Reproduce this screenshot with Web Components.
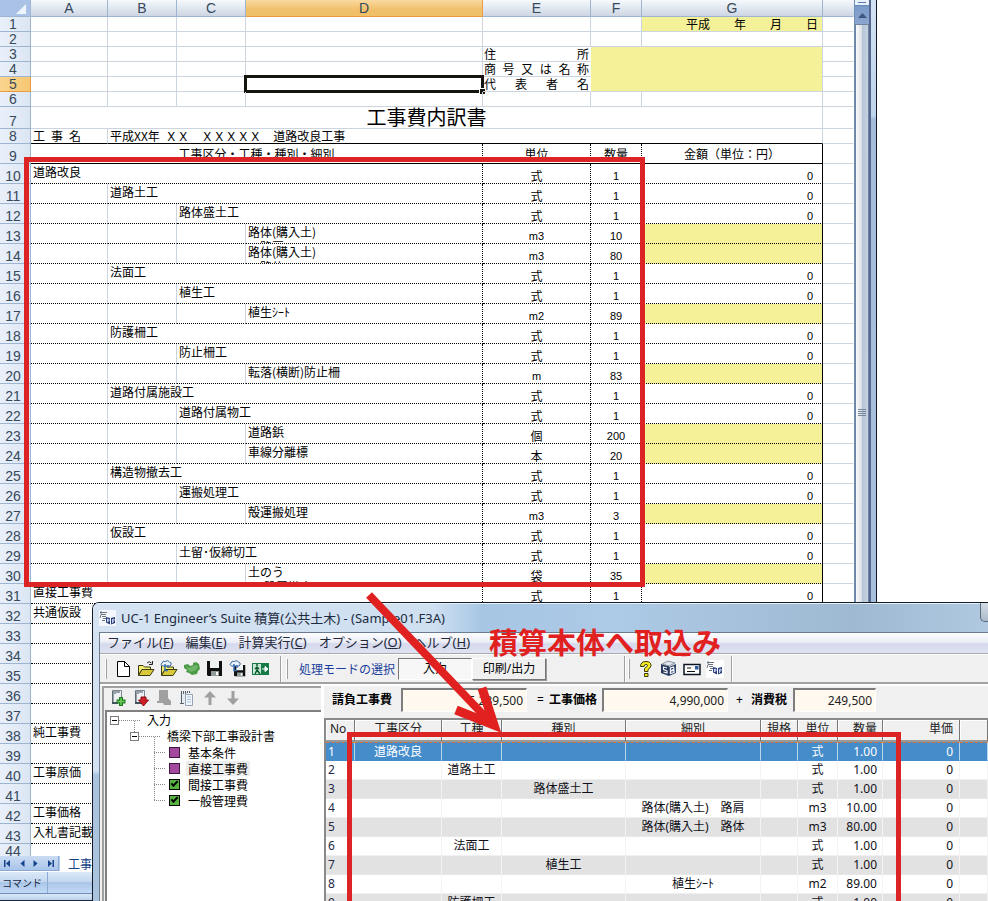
<!DOCTYPE html>
<html lang="ja">
<head>
<meta charset="utf-8">
<title>UC-1 Engineer's Suite 積算</title>
<style>
html,body{margin:0;height:100%;overflow:hidden;background:#fff}
body{font:12px/16px "Noto Sans","Noto Sans CJK JP",sans-serif;color:#000}
</style>
</head>
<body>
<desk-top>
  <book-window><sheet-grid></sheet-grid></book-window>
  <mark-box class="first"></mark-box>
  <app-window caption="UC-1 Engineer’s Suite 積算(公共土木) - (Sample01.F3A)">
    <menu-bar slot="menu"></menu-bar>
    <tool-bars slot="tools"></tool-bars>
    <tree-panel slot="side"></tree-panel>
    <amount-bar slot="main">
      <amount-field name="請負工事費" value="5,239,500"></amount-field>
      <amount-field sign="=" name="工事価格" value="4,990,000"></amount-field>
      <amount-field class="tax" sign="+" name="消費税" value="249,500"></amount-field>
    </amount-bar>
    <estimate-grid slot="main"></estimate-grid>
  </app-window>
  <mark-box class="second"></mark-box>
  <call-out>積算本体へ取込み</call-out>
</desk-top>

<script>
function define(name, html, setup) {
  customElements.define(name, class extends HTMLElement {
    constructor() {
      super();
      const t = document.createElement('template');
      t.innerHTML = html;
      this.attachShadow({mode: 'open'}).append(t.content.cloneNode(true));
    }
    connectedCallback() { if (setup) setup.call(this, this.shadowRoot); }
  });
}

define('desk-top', `
<style>
:host{display:block;position:relative;height:100vh;overflow:hidden;background:#fff}
::slotted(book-window){height:100%;margin-right:111px}
::slotted(mark-box){position:absolute}
::slotted(mark-box.first){left:24px;right:343px;top:157px;height:430px}
::slotted(mark-box.second){left:347px;right:87px;top:732px;bottom:-20px}
::slotted(app-window){position:absolute;left:92px;top:602px;right:0;bottom:0}
::slotted(call-out){position:absolute;left:360px;top:585px}
</style><slot></slot>`);

define('mark-box', `<style>:host{box-sizing:border-box;border:5px solid #dd2424;pointer-events:none}</style>`);

define('call-out', `
<style>
:host{display:block;width:380px;height:160px;pointer-events:none;color:#e0211f;
 font:bold 29px/36px "Noto Sans CJK JP",sans-serif}
svg{position:absolute;left:0;top:0}
p{margin:0;padding:38px 0 0 129px;white-space:nowrap}
</style>
<svg width="160" height="160" viewBox="0 0 160 160" fill="none" stroke="#e0211f" stroke-width="8">
<path d="M9 10 L132 139"/><path d="M122 103 L134 140 L96 125" stroke-width="9"/></svg>
<p><slot></slot></p>`);

/* ---------- workbook window ---------- */
define('book-window', `
<style>
:host{display:flex;flex-direction:column;position:relative;background:#fff}
.body{flex:1;min-height:0;display:flex;overflow:hidden}
.sheet{flex:1;min-width:0;overflow:hidden}
.scroll{flex:none;width:15px;display:flex;flex-direction:column;background:#dde5f0;border-left:1px solid #6f8fbb;box-sizing:border-box}
.split{height:6px;background:#e9f2fc;border-bottom:1px solid #6888b5;box-sizing:border-box;text-align:center}
.split::before{content:"";display:block;width:8px;height:1px;background:#5b7bab;margin:2px auto 0}
button{border:0;padding:0;margin:0;font:inherit;background:none}
.up{height:18px;background:linear-gradient(#7b9bc9,#8aa6ce);display:flex;align-items:center;justify-content:center}
.thumb{flex:1;border:1px solid #71849f;background:linear-gradient(90deg,#fafbfc,#dde1e6 45%,#b6c5d8 55%,#c6d2e1);display:flex;justify-content:center}
.thumb svg{margin-top:384px}
.frame{flex:none;width:8px;box-sizing:border-box;border-left:2px solid #56688f;border-right:1px solid #101722;background:linear-gradient(#d3e3f3 0,#bed4ea 116px,#a3bdda 119px,#a9c3df)}
.tabs{flex:none;height:15px;display:flex;background:#b7cfee;align-items:stretch;overflow:hidden}
.nav{width:59px;display:flex;align-items:center;justify-content:space-around;background:linear-gradient(#cbdcf3,#a9c5ea);border-right:1px solid #89a9d4;border-bottom:1px solid #89a9d4;box-sizing:border-box}
.nav button{display:flex}
.tab{background:#fff;color:#15428b;padding:0 8px;margin-left:1px;font:12px/15px "Noto Sans CJK JP",sans-serif}
.status{flex:none;height:22px;display:flex;align-items:center;box-sizing:border-box;border-bottom:1px solid #6f8eb8;background:linear-gradient(#dbe8f8,#c4d8f0 45%,#aac6e8 50%,#c2dbf7);font:10px/14px "Noto Sans CJK JP",sans-serif;color:#1c2b45;padding-left:2px;margin-top:1px}
.status span{width:45px;border-right:1px solid #8cacd6;align-self:stretch;line-height:21px}
.base{flex:none;height:7px;box-sizing:border-box;background:linear-gradient(#dce9f6,#b9d0e8);border-bottom:1px solid #1b2a3f}
</style>
<div class="body">
 <div class="sheet"><slot></slot></div>
 <div class="scroll"><div class="split"></div>
  <button class="up" aria-label="上へ"><svg width="9" height="5"><path d="M0 5 L4.500 0 L9 5Z" fill="#3f5681"/></svg></button>
  <div class="thumb"><svg width="8" height="8"><path d="M0 .5H8M0 2.500H8M0 4.500H8M0 6.500H8" stroke="#77879c"/></svg></div></div>
 <div class="frame"></div>
</div>
<div class="tabs"><div class="nav">
 <button aria-label="先頭"><svg width="7" height="7"><path d="M0 0H1.500V7H0ZM6 0V7L2 3.500Z" fill="#15428b"/></svg></button>
 <button aria-label="前"><svg width="5" height="7"><path d="M4.500 0V7L.5 3.500Z" fill="#15428b"/></svg></button>
 <button aria-label="次"><svg width="5" height="7"><path d="M.5 0V7L4.500 3.500Z" fill="#15428b"/></svg></button>
 <button aria-label="末尾"><svg width="7" height="7"><path d="M5.500 0H7V7H5.500ZM1 0V7L5 3.500Z" fill="#15428b"/></svg></button>
 </div><button class="tab">工事</button></div>
<div class="status"><span>コマンド</span></div>
<div class="base"></div>`);

const items = [
 [10,0,'道路改良','式','1','0'],[11,1,'道路土工','式','1','0'],[12,2,'路体盛土工','式','1','0'],
 [13,3,'路体(購入土)<br>　路肩','m3','10'],[14,3,'路体(購入土)<br>　路体','m3','80'],
 [15,1,'法面工','式','1','0'],[16,2,'植生工','式','1','0'],[17,3,'植生ｼｰﾄ','m2','89'],
 [18,1,'防護柵工','式','1','0'],[19,2,'防止柵工','式','1','0'],[20,3,'転落(横断)防止柵','m','83'],
 [21,1,'道路付属施設工','式','1','0'],[22,2,'道路付属物工','式','1','0'],
 [23,3,'道路鋲','個','200'],[24,3,'車線分離標','本','20'],
 [25,1,'構造物撤去工','式','1','0'],[26,2,'運搬処理工','式','1','0'],[27,3,'殻運搬処理','m3','3'],
 [28,1,'仮設工','式','1','0'],[29,2,'土留･仮締切工','式','1','0'],[30,3,'土のう<br>　(設置撤去)','袋','35'],
 [31,0,'直接工事費','式','1','0']
];
const totals = {32:'共通仮設',38:'純工事費',40:'工事原価',42:'工事価格',43:'入札書記載'};
for (let n = 32; n <= 43; n++) items.push([n,0,totals[n] || '','','',' ']);

define('sheet-grid', `
<style>
:host{display:block}
table{width:100%;table-layout:fixed;border-collapse:separate;border-spacing:0;font:12px/15px "Noto Sans CJK JP",sans-serif}
th,td{padding:0;border:0 solid #ccd4e0;border-width:0 1px 1px 0;font-weight:normal;text-align:left;position:relative}
.c{height:14px;display:flex;align-items:flex-end;white-space:nowrap;line-height:15px}
thead .c{height:16px;align-items:center;justify-content:center}
th{font:14px/14px "Liberation Sans",sans-serif;color:#37495c;background:linear-gradient(90deg,#e9f0fa,#dce6f3);border-color:#9db5d0}
th .c{line-height:14px;justify-content:center}
thead th{background:linear-gradient(#f6f9fc,#dfe6ef 55%,#ccd6e3)}
thead th.corner{background:#a9c2e6}
thead th.corner .c{justify-content:flex-end}
thead th.on{background:linear-gradient(#f9d9a0,#f0c06a 60%,#efc068);border-color:#ef9b43}
tbody th .c{padding-right:4px}
tbody th.on{background:linear-gradient(90deg,#fad48f,#f6c873);border-color:#ef9b43}
.t .c{height:21px;font-size:20px;line-height:22px;justify-content:center}
.t th .c{font-size:14px;line-height:14px}
.h .c,.r .c{height:19px}
.no{border-right-color:transparent}
.k>td:not(.x){border-bottom:1px solid #000}
.r>td:not(.x){border-bottom:1px dotted #000}
.dot{border-right:1px dotted #000!important}
.sol{border-right:1px solid #000!important}
.y{background:#f5f199}
.name .c{align-items:flex-start;padding-left:2px;overflow:hidden}
.mid .c{justify-content:center}
.mid.num .c,.amt .c{font-family:"Liberation Sans","Noto Sans CJK JP",sans-serif;font-size:11px;line-height:13px}
.amt .c{justify-content:flex-end;padding-right:9px}
.h .c{align-items:center}
.h th .c{align-items:flex-end}
.sp .c{justify-content:space-between;padding:0 1px}
.kn .c{padding:0 26px 0 2px}
.b .c{padding-left:2px}
.date .c{justify-content:flex-end;padding-right:4px}
.sel{position:absolute;inset:-2px;border:3px solid #15140f}
.sel::after{content:"";position:absolute;right:-4px;bottom:-4px;width:5px;height:5px;background:#15140f;border:1px solid #fff;border-width:1px 0 0 1px}
</style>
<table><colgroup><col style="width:31px"><col style="width:77px"><col style="width:69px"><col style="width:69px"><col><col style="width:108px"><col style="width:51px"><col style="width:181px"><col style="width:31px"></colgroup>
<thead></thead><tbody></tbody></table>`, function (root) {
  const td = (cls, text = '', span = 1) => `<td class="${cls}" colspan="${span}"><div class="c">${text}</div></td>`;
  const th = (n, on) => `<th scope="row"${on ? ' class="on"' : ''}><div class="c">${n}</div></th>`;
  const spread = s => [...s].map(ch => `<span>${ch}</span>`).join('');
  root.querySelector('thead').innerHTML = '<tr><th class="corner"><div class="c"><svg width="14" height="14"><path d="M10 3V13H0Z" fill="#eef4fc"/></svg></div></th>' +
    [...'ABCDEFG'].map(l => `<th scope="col"${l === 'D' ? ' class="on"' : ''}><div class="c">${l}</div></th>`).join('') + '<th class="no"></th></tr>';
  const end = td('x no');
  let h = '';
  h += `<tr>${th(1)}${td('').repeat(6)}${td('y date', '平成　　年　　月　　日')}${end}</tr>`;
  h += `<tr>${th(2)}${td('').repeat(7)}${end}</tr>`;
  h += `<tr>${th(3)}${td('').repeat(4)}${td('sp no', spread('住所'))}<td class="y" colspan="2" rowspan="3"></td>${end}</tr>`;
  h += `<tr>${th(4)}${td('').repeat(4)}${td('sp no', spread('商号又は名称'))}${end}</tr>`;
  h += `<tr>${th(5, true)}${td('').repeat(3)}<td><div class="c"></div><div class="sel"></div></td>${td('sp no', spread('代表者名'))}${end}</tr>`;
  h += `<tr>${th(6)}${td('').repeat(7)}${end}</tr>`;
  h += `<tr class="t">${th(7)}${td('', '工事費内訳書', 7)}${end}</tr>`;
  h += `<tr class="k">${th(8)}${td('sp kn', spread('工事名'))}${td('b', '平成XX年&nbsp; ＸＸ　ＸＸＸＸＸ　道路改良工事', 6)}${end}</tr>`;
  h += `<tr class="h k">${th(9)}${td('mid dot', '工事区分・工種・種別・細別', 4)}${td('mid dot', '単位')}${td('mid dot', '数量')}${td('mid sol', '金額（単位：円）')}${end}</tr>`;
  for (const [n, lv, name, unit, qty, amt] of items) {
    h += `<tr class="r">${th(n)}${td('').repeat(lv)}${td('name dot', `<span>${name}</span>`, 4 - lv)}${td(unit[0] === 'm' ? 'mid num dot' : 'mid dot', unit)}${td('mid num dot', qty)}${td(amt ? 'amt sol' : 'amt sol y', amt)}${end}</tr>`;
  }
  h += `<tr>${th(44)}${td('').repeat(7)}${end}</tr>`;
  root.querySelector('tbody').innerHTML = h;
});

/* ---------- estimate application window ---------- */
const logo = `<path d="M1 2.500H8M2 1V4M7 4.500H2L1 8M3 6.500H7M4 8.500H8M3 10.500H6" stroke="#6b747e" stroke-width="1" fill="none"/><path d="M7 7L11 8V14.500L7 12.500Z M12 8L16 7V13L12 14.500Z" fill="#2b3f7d"/><path d="M8.500 12V9L10 9.500V11L8.500 11M13.500 13V9.500L15 9V11L13.500 11.500" stroke="#c9d4ee" fill="none"/>`;

define('app-window', `
<style>
:host{display:flex;flex-direction:column;box-sizing:border-box;border:1px solid #161c26;border-width:1px 0 0 1px;border-radius:7px 0 0 0;overflow:hidden;padding:0 0 0 6px;
 background:linear-gradient(#cfdff0 0,#c5d8ec 28px,#d3e1f0 30px,#d3e1f0 168px,#a9c2de 172px)}
header{display:flex;align-items:center;height:29px;flex:none;margin-left:-6px;padding-left:6px;color:#1d2b40;background:linear-gradient(90deg,#d5e3f2 0,#cfe0f1 340px,#a6c6e4 390px,#adcae6 520px,#9fb9d2 760px,#b0c9e1);box-shadow:inset 0 1px #e8f2fb}
header svg{margin-right:5px;background:#f4f7fb}
header h1{font:13px/18px "Noto Sans","Noto Sans CJK JP",sans-serif;margin:0;flex:1;white-space:nowrap}
header button{width:8px;height:19px;align-self:flex-start;border:1px solid #5b6a7c;border-width:0 0 1px 1px;border-radius:0 0 0 5px;background:linear-gradient(#d5dde6,#a9b9ca);padding:0}
.client{flex:1;min-height:0;display:flex;flex-direction:column;background:#f0f0f0;border:1px solid #6a7b8f;border-width:1px 0 0 1px}
.panes{flex:1;min-height:0;display:flex;border-top:2px solid #fff}
.side{flex:none;width:221px;display:flex}
::slotted(tree-panel){flex:1}
.main{flex:1;min-width:0;display:flex;flex-direction:column;border-left:3px solid #fff}
</style>
<header><svg width="17" height="16" viewBox="0 0 17 16">${logo}</svg><h1></h1><button aria-label="最小化"></button></header>
<div class="client"><slot name="menu"></slot><slot name="tools"></slot>
<div class="panes"><div class="side"><slot name="side"></slot></div><div class="main"><slot name="main"></slot></div></div></div>`,
function (root) { root.querySelector('h1').textContent = this.getAttribute('caption'); });

define('menu-bar', `
<style>
:host{display:flex;flex:none;height:20px;background:linear-gradient(#fdfdff,#eceef7 45%,#d5d9ec 55%,#dfe2f1);border-bottom:1px solid #a9a9a9;box-shadow:0 1px #fff;white-space:nowrap;padding-left:1px}
button{border:0;background:none;padding:0 6px;margin:0;color:#23283a;font:13px/18px "Noto Sans","Noto Sans CJK JP",sans-serif;height:18px}
</style>
<button>ファイル(<u>F</u>)</button><button>編集(<u>E</u>)</button><button>計算実行(<u>C</u>)</button><button>オプション(<u>O</u>)</button><button>ヘルプ(<u>H</u>)</button>`);

const folder = `<path d="M1.500 5.500H6L7.500 7H13.500V9.500H5L1.500 15Z" fill="#f6ef6e" stroke="#3b3a10"/><path d="M1.500 15.500L5 9.500H17L13 15.500Z" fill="#d9c93a" stroke="#3b3a10"/>`;
const cloud = `<path d="M2.500 6Q0 4.500 2 3Q2.500 .5 5.500 1.500Q8 -.5 9.500 2Q12 2.500 11 5Q10 6.500 8.500 6Z" fill="#eaf3fd" stroke="#38689e"/><path d="M5 4V10.500H8M8 5V8" stroke="#3a70b0" fill="none" stroke-width="1.500"/>`;
const disk = (x, y, s) => `<g transform="translate(${x} ${y}) scale(${s})"><path d="M0 0H15V15H1L0 14Z" fill="#111"/><path d="M3 0H12V7H3Z" fill="#eef2f2"/><path d="M4 10H12V15H4Z" fill="#8f9a9a"/><path d="M9 11H11V14H9Z" fill="#fff"/></g>`;
const page = `<path d="M3.500 1.500H12.500V13.500H3.500Z" fill="#eef1f4" stroke="#7a8790"/><path d="M4 2V14M6 2V5M8 2V4M10 2V4" stroke="#44525c"/><path d="M3 14H9" stroke="#44525c" stroke-width="2"/>`;
const icons = {
 new:`<path d="M3.500 1.500H10.500L15.500 6.500V16.500H3.500Z" fill="#fff" stroke="#000"/><path d="M10.500 1.500V6.500H15.500" fill="none" stroke="#000"/>`,
 open:`${folder}<path d="M10 3Q12 .5 14.500 3M15.500 1V4.500H12" fill="none" stroke="#222"/>`,
 cloudopen:`${folder}${cloud}`,
 green:`<path d="M1 5L5 4L7 6L10 5V3L13 2L16 4L17 9L15 11L14 14L9 15L6 13L3 12L4 10L1 8Z" fill="#4d9a47"/><path d="M3 6L6 8L12 5L15 6L13 10L8 12L5 10Z" fill="#6fb468"/>`,
 save:disk(1, 1, 1),
 cloudsave:`${disk(5, 5, .75)}${cloud}`,
 exit:`<path d="M0 3H17V15H0Z" fill="#157a45"/><path d="M1 4H9V14H1Z" fill="#c6e7d3"/><path d="M5 4V6M3 9L5 7L7 9M5 7V10L3 14M5 10L8 14" stroke="#0c5b30" stroke-width="1.500" fill="none"/><path d="M10 9H14M13 6.500L16 9L13 11.500Z" stroke="#fff" fill="#fff"/>`,
 help:`<path d="M3.500 6.500Q3.500 1.500 9 1.500Q14 1.500 14 5.500Q14 7.500 11 9.500V11.500H7.500V8.500Q10.500 6.500 10.500 5.500Q10.500 4.500 9 4.500Q7 4.500 7 6.500Z" fill="#f3ea21" stroke="#3c3a00"/><path d="M7.500 13.500H11V16.500H7.500Z" fill="#f3ea21" stroke="#3c3a00"/>`,
 book:`<path d="M1 4L9 6V16L1 13Z" fill="#26365a"/><path d="M9 7L16 4V13L9 16Z" fill="#33466e"/><path d="M2 4L8 1L15 3L9 6Z" fill="#dfe5ea" stroke="#8a96a3"/><path d="M7 8L3.500 7V9.500L7 11V13L3.500 12M10.500 14V8L13.500 7L14 9L11 11L14 10.500V12.500L10.500 13.500" stroke="#f2f5fa" fill="none" stroke-width="1.200"/>`,
 card:`<path d="M1 4.500H17V14.500H1Z" fill="#fff" stroke="#0d1424" stroke-width="1.500"/><path d="M4 8H8M4 11.500H12" stroke="#111" stroke-width="1.200"/><path d="M12 6H15.500V9.500H12Z" fill="#2d5aa0"/>`,
 logo:`<path d="M0 0H18V18H0Z" fill="#fff"/>${logo}`,
 add:`${page}<path d="M12 8V17M7.500 12.500H16.500" stroke="#1d7c23" stroke-width="4"/><path d="M12 9V16M8.500 12.500H15.500" stroke="#70ce5b" stroke-width="1.500"/>`,
 del:`${page}<path d="M9 8H14V11H16.500L11.500 17L6.500 11H9Z" fill="#cf1f24" stroke="#8d0f14"/>`,
 dis:`<path d="M4 1H13V9L16 12V16H9L8 14H2V12H4Z" fill="#a0a0a0"/>`,
 copy:`<path d="M2 2H10V14H2Z" fill="#e8ebee"/><path d="M2 14.500H6M3.500 2V14M5.500 2V5M7.500 2V5M9.500 2V4M11.500 2V4" stroke="#59646e" fill="none"/><path d="M7.500 5.500H14.500V16.500H7.500Z" fill="#f4f7fb" stroke="#93a4b8"/><path d="M9 8H13M9 10.500H13M9 13H13" stroke="#a8bfda"/>`,
 up:`<path d="M9 2L15 8.500H10.500V16H7.500V8.500H3Z" fill="#a0a0a0"/>`,
 down:`<path d="M9 16L15 9.500H10.500V2H7.500V9.500H3Z" fill="#a0a0a0"/>`
};

define('icon-button', `
<style>:host{display:block;flex:none;width:23px}button{display:flex;align-items:center;justify-content:center;width:23px;height:20px;border:0;padding:0;background:none}</style>
<button><svg width="18" height="18" viewBox="0 0 18 18"></svg></button>`, function (root) {
  root.querySelector('svg').innerHTML = icons[this.getAttribute('icon')];
  root.querySelector('button').setAttribute('aria-label', this.getAttribute('label'));
});

define('tool-bars', `
<style>
:host{display:flex;flex:none;height:26px;margin-top:2px;border-bottom:2px solid #a2a2a2;background:#f0f0f0}
.bar{display:flex;align-items:center;box-sizing:border-box;border-right:1px solid #a0a0a0;box-shadow:1px 0 #fff;padding-left:3px}
.bar::before{content:"";width:1px;height:20px;border-right:1px solid #a0a0a0;background:#fff;margin:0 4px 0 2px;flex:none}
.a{width:181px}.b{width:344px}.c{width:107px;padding-left:1px}
.b>button{height:22px;width:74px;margin:0;padding:0;box-sizing:border-box;font:12px/16px "Noto Sans","Noto Sans CJK JP",sans-serif;background:#f0f0f0;border:1px solid;border-color:#fff #777 #777 #fff;box-shadow:1px 1px #999}
.b>.down{background:#f7f7f7;border-color:#777 #fff #fff #777;box-shadow:none}
span{color:#1b3f9c;padding:0 3px 0 7px;white-space:nowrap;font:12px/16px "Noto Sans CJK JP",sans-serif}
</style>
<div class="bar a"><icon-button icon="new" label="新規"></icon-button><icon-button icon="open" label="開く"></icon-button><icon-button icon="cloudopen" label="クラウドから開く"></icon-button><icon-button icon="green" label="地域"></icon-button><icon-button icon="save" label="保存"></icon-button><icon-button icon="cloudsave" label="クラウドへ保存"></icon-button><icon-button icon="exit" label="終了"></icon-button></div>
<div class="bar b"><span>処理モードの選択</span><button class="down">入力</button><button>印刷/出力</button></div>
<div class="bar c"><icon-button icon="help" label="ヘルプ"></icon-button><icon-button icon="book" label="マニュアル"></icon-button><icon-button icon="card" label="連絡先"></icon-button><icon-button icon="logo" label="情報"></icon-button></div>`);

define('tree-panel', `
<style>
:host{display:flex;flex-direction:column;box-sizing:border-box;border:1px solid #a0a0a0;border-width:2px 0 0 2px;margin-left:2px;font:12px/16px "Noto Sans CJK JP",sans-serif}
.tools{display:flex;height:22px;padding-left:2px;align-items:flex-start;flex:none}
.tree{flex:1;background:#fff;border:2px solid #808080;border-width:2px 0 0 2px;margin-left:1px;box-sizing:border-box}
ul{list-style:none;margin:0;padding:0}
.tree>ul{padding-left:3px}
li li{padding-left:20px}
.row{display:flex;align-items:center;height:16px;white-space:nowrap}
.box{width:9px;height:9px;box-sizing:border-box;border:1px solid #7c7c7c;background:#fff;padding:0;display:flex;align-items:center;justify-content:center;flex:none}
.box::before{content:"";width:5px;height:1px;background:#000}
.row i{width:21px;margin-right:7px;border-top:1px dotted #888;flex:none}
.kid{position:relative}
.kid::before{content:"";position:absolute;left:24px;top:-7px;height:11px;border-left:1px dotted #888}
.leafs{position:relative}
.leafs::before{content:"";position:absolute;left:24px;top:-7px;height:63px;border-left:1px dotted #888}
.leafs .row i{width:11px;margin:0 4px 0 4px}
input{appearance:none;width:11px;height:11px;box-sizing:border-box;margin:0 6px 0 0;border:1px solid #3b1840;background:#a4489d;flex:none}
input:checked{border-color:#000;background:#55b43c;display:flex}
input:checked::before{content:"";width:5px;height:2px;border:solid #000;border-width:0 0 2px 2px;transform:rotate(-45deg);margin:1px 0 0 1px}
label{padding:0 2px;line-height:15px}
.on{background:#ededed}
</style>
<div class="tools"><icon-button icon="add" label="追加"></icon-button><icon-button icon="del" label="削除"></icon-button><icon-button icon="dis" label="切り取り"></icon-button><icon-button icon="copy" label="コピー"></icon-button><icon-button icon="up" label="上へ"></icon-button><icon-button icon="down" label="下へ"></icon-button></div>
<div class="tree"><ul><li><div class="row"><button class="box" aria-label="閉じる"></button><i></i><span>入力</span></div>
<ul class="kid"><li><div class="row"><button class="box" aria-label="閉じる"></button><i></i><span>橋梁下部工事設計書</span></div>
<ul class="leafs">
<li><div class="row"><i></i><input type="checkbox" id="a"><label for="a">基本条件</label></div></li>
<li><div class="row"><i></i><input type="checkbox" id="b"><label for="b" class="on">直接工事費</label></div></li>
<li><div class="row"><i></i><input type="checkbox" id="c" checked><label for="c">間接工事費</label></div></li>
<li><div class="row"><i></i><input type="checkbox" id="d" checked><label for="d">一般管理費</label></div></li>
</ul></li></ul></li></ul></div>`);

define('amount-bar', `<style>:host{display:flex;flex:none;height:32px;align-items:center;padding:0 0 4px 8px;box-sizing:border-box;background:#f0f0f0}</style><slot></slot>`);

define('amount-field', `
<style>
:host{display:flex;align-items:center;margin-right:10px;--w:126px}
:host([sign="="]){margin-right:8px}
:host(.tax){--w:83px}
b{font-weight:normal;width:12px}
b:empty{display:none}
label{font-weight:bold;padding-right:9px;white-space:nowrap}
:host([sign="="]) label{padding-right:5px}
:host(.tax) label{padding-right:6px}
:host(.tax) b{width:15px}
input{width:var(--w);height:24px;box-sizing:border-box;border:1px solid;border-width:2px 1px 1px 2px;border-color:#7d7d7d #fff #fff #7d7d7d;background:#fff9f0;text-align:right;padding:0 3px 0 0;font:12px/16px "Noto Sans","Noto Sans CJK JP",sans-serif;color:#222;margin:0}
</style><b></b><label for="v"></label><input id="v" readonly>`, function (root) {
  root.querySelector('b').textContent = this.getAttribute('sign') || '';
  root.querySelector('label').textContent = this.getAttribute('name');
  root.querySelector('input').value = this.getAttribute('value');
});

define('estimate-grid', `
<style>
:host{display:block;flex:1;min-height:0;overflow:hidden;border:2px solid #8a8a8a;border-width:2px 0 0 2px;background:#fff}
table{width:100%;table-layout:fixed;border-collapse:separate;border-spacing:0}
th,td{padding:0;font-weight:normal;white-space:nowrap;text-align:center}
th{height:20px;line-height:18px;vertical-align:top;background:#f0f0f0;border-right:1px solid #777;border-bottom:2px solid #999;box-shadow:inset 1px 1px #fff;color:#222}
td{height:18px;line-height:18px;border-right:1px solid #f3f3f3;border-bottom:1px solid #f0f0f0;color:#101018}
th:first-child{text-align:left;padding-left:4px}
td:first-child{text-align:left;padding-left:2px;color:#1e2a48;border-right-color:transparent}
.q{text-align:right;padding-right:5px}
.p{text-align:right;padding-right:6px}
tr:nth-child(odd) td{background:#e2e2e2;border-bottom-color:#e8e8e8}
tbody tr:first-child td{height:17px;line-height:17px;background:#458ccb;color:#fff;border-bottom-color:#458ccb;border-right-color:#bcd6ee;border-top:1px dashed #d8733a}
</style>
<table><colgroup><col style="width:29px"><col style="width:87px"><col style="width:60px"><col style="width:124px"><col style="width:135px"><col style="width:37px"><col style="width:40px"><col style="width:45px"><col style="width:77px"><col></colgroup>
<thead><tr><th>No</th><th>工事区分</th><th>工種</th><th>種別</th><th>細別</th><th>規格</th><th>単位</th><th class="q">数量</th><th class="p">単価</th><th></th></tr></thead><tbody></tbody></table>`,
function (root) {
  const data = [[0,'道路改良','式','1.00'],[1,'道路土工','式','1.00'],[2,'路体盛土工','式','1.00'],
    [3,'路体(購入土)　路肩','m3','10.00'],[3,'路体(購入土)　路体','m3','80.00'],[1,'法面工','式','1.00'],
    [2,'植生工','式','1.00'],[3,'植生ｼｰﾄ','m2','89.00'],[1,'防護柵工','式','1.00']];
  root.querySelector('tbody').innerHTML = data.map(([lv, name, unit, q], i) =>
    `<tr><td>${i + 1}</td>${[0,1,2,3].map(c => `<td>${c === lv ? name : ''}</td>`).join('')}<td></td><td>${unit}</td><td class="q">${q}</td><td class="p">0</td><td></td></tr>`).join('');
});
</script>
</body>
</html>
